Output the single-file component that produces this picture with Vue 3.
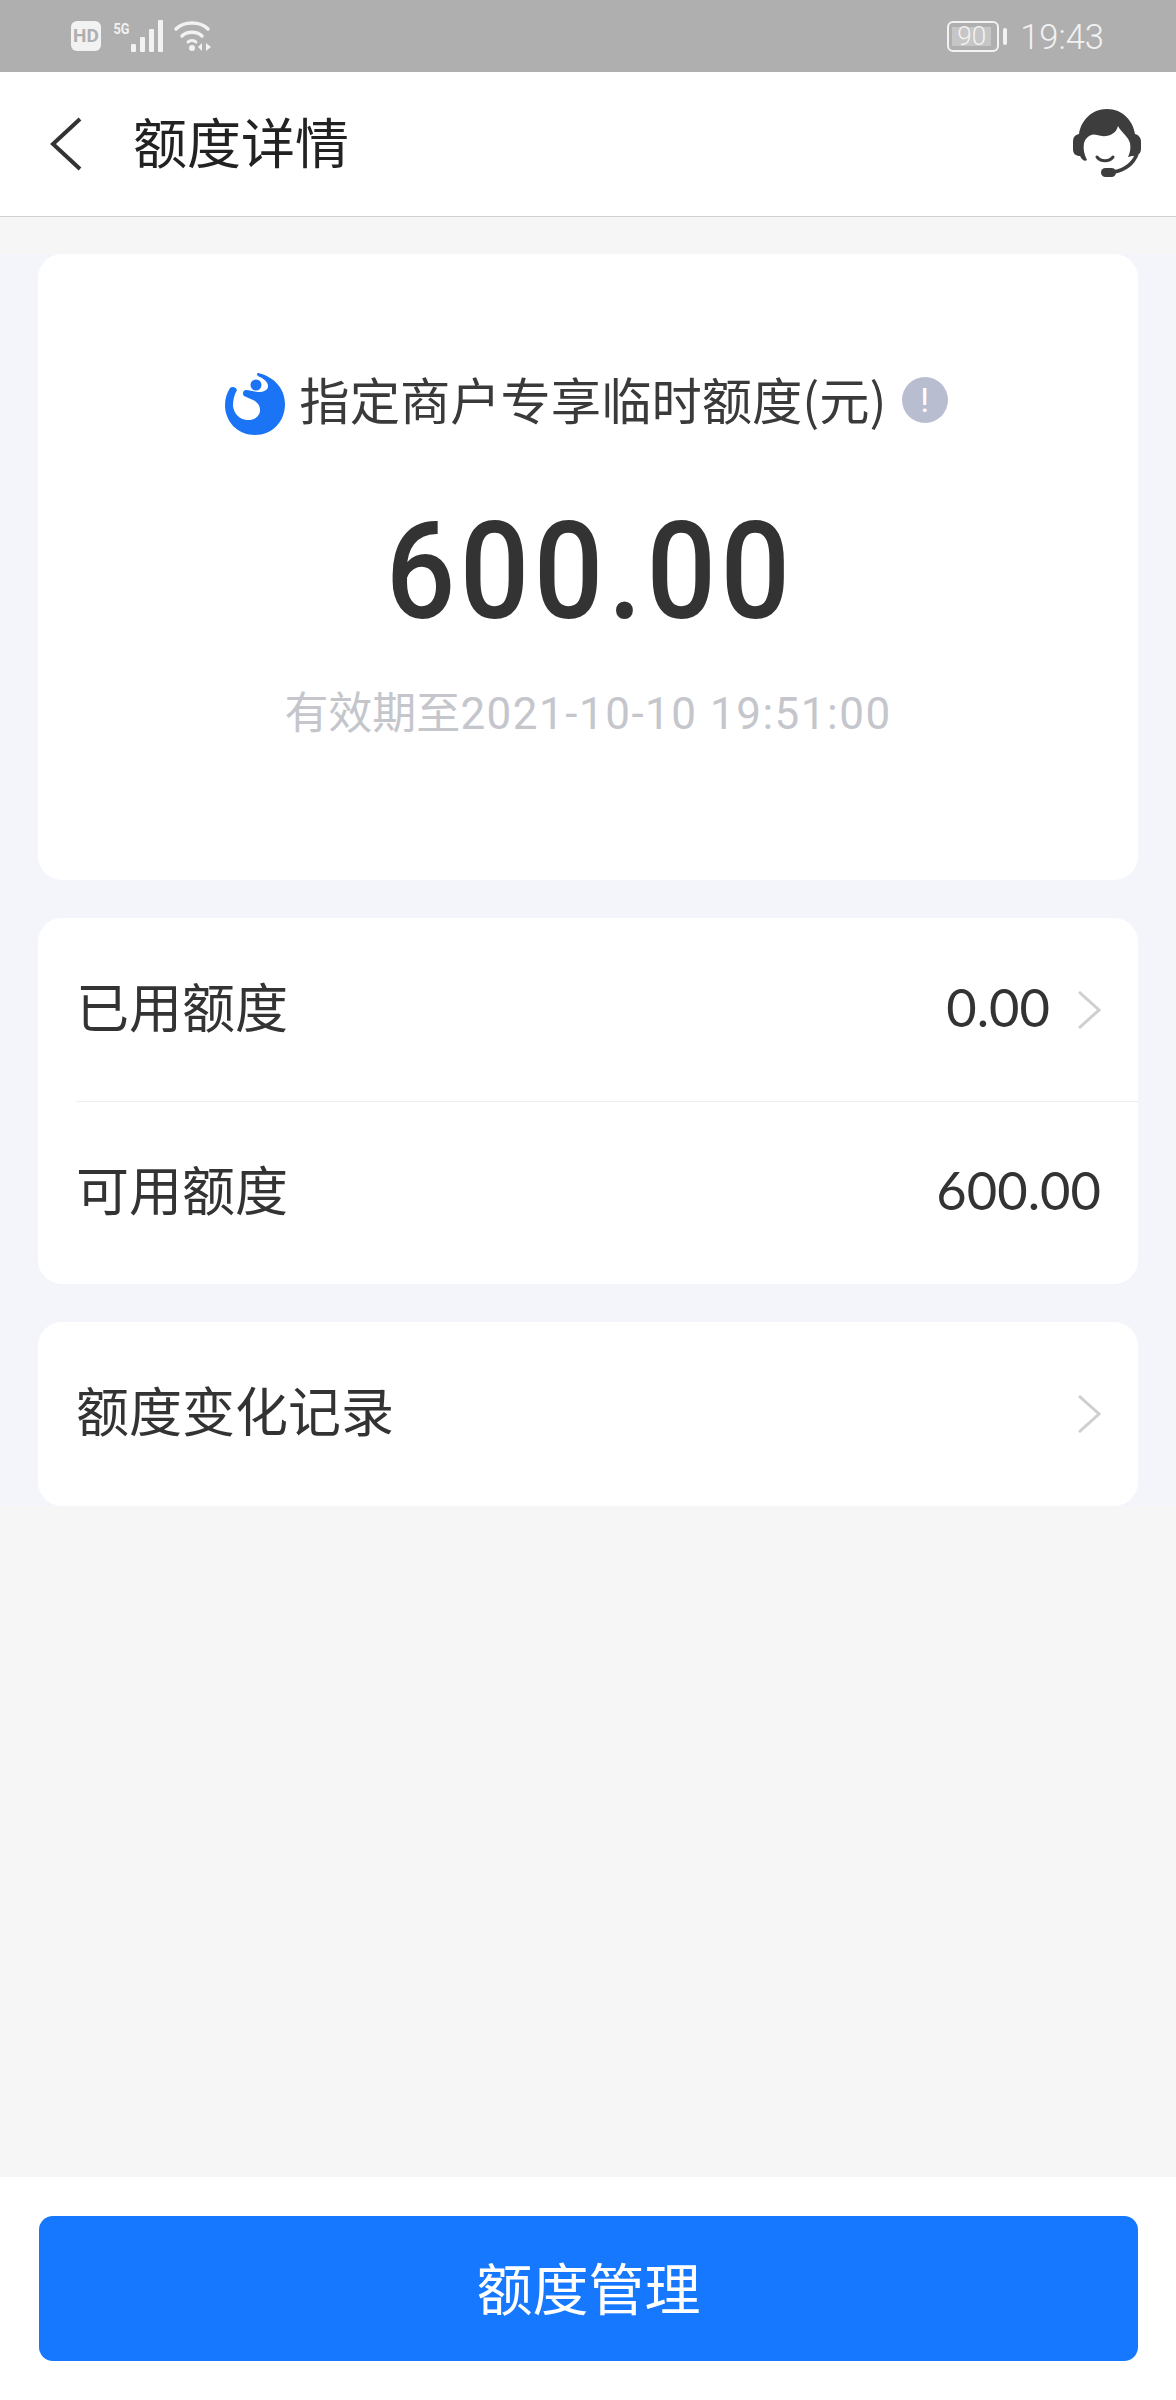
<script setup>
const rows = [
  { label: '已用额度', value: '0.00', arrow: true },
  { label: '可用额度', value: '600.00', arrow: false },
];
</script>

<template>
  <div class="page">
    <div class="status-bar">
      <div class="status-left">
        <span class="hd">HD</span>
        <span class="five-g">5G</span>
        <svg class="signal" width="32" height="32" viewBox="0 0 32 32">
          <rect x="0" y="24" width="5" height="8" rx="1" fill="#f2f2f2" />
          <rect x="9" y="17" width="5" height="15" rx="1" fill="#f2f2f2" />
          <rect x="18" y="9" width="5" height="23" rx="1" fill="#f2f2f2" />
          <rect x="27" y="0" width="5" height="32" rx="1" fill="#f2f2f2" />
        </svg>
        <svg class="wifi" width="38" height="32" viewBox="0 0 38 32">
          <path d="M2 9C10 1 26 1 34 9" fill="none" stroke="#f2f2f2" stroke-width="3.5" stroke-linecap="round" />
          <path d="M8 16C13 11 23 11 28 16" fill="none" stroke="#f2f2f2" stroke-width="3.5" stroke-linecap="round" />
          <path d="M14 22C16 20 20 20 22 22" fill="none" stroke="#f2f2f2" stroke-width="3" stroke-linecap="round" />
          <circle cx="18" cy="28" r="3" fill="#f2f2f2" />
          <path d="M28 23V31L24 27ZM32 23V31L37 27Z" fill="#f2f2f2" />
        </svg>
      </div>
      <div class="status-right">
        <div class="battery"><span class="battery-level">90</span></div>
        <span class="battery-cap"></span>
        <span class="clock">19:43</span>
      </div>
    </div>

    <div class="nav">
      <svg class="back" width="34" height="54" viewBox="0 0 34 54">
        <path d="M31 2L4 27L31 52" fill="none" stroke="#333" stroke-width="4" />
      </svg>
      <span class="nav-title">额度详情</span>
      <svg class="service" width="70" height="72" viewBox="0 0 70 72">
        <path d="M35 1C19 1 9 13 7 26C2 27 1 30 1 35V41C1 46 4 48 8 48C10 52 13 54 15 52C12 46 11 41 12 35C14 29 19 25 25 27C34 30 44 27 46 18C49 24 56 28 58 35C59 40 58 45 56 49L60 48C65 48 69 46 69 41V34C69 30 67 27 63 26C61 13 51 1 35 1Z" fill="#3d3d3d" />
        <path d="M25 49C29 54 37 54 41 49" fill="none" stroke="#3d3d3d" stroke-width="3" stroke-linecap="round" />
        <path d="M65 46C61 56 52 62 42 64" fill="none" stroke="#3d3d3d" stroke-width="3.5" />
        <rect x="29" y="60" width="15" height="9" rx="4.5" fill="#3d3d3d" />
      </svg>
    </div>

    <div class="content">
      <div class="cards">
        <div class="card quota">
          <div class="quota-title">
            <svg class="logo" width="60" height="62" viewBox="0 0 60 62">
              <path d="M33 0C50 4 60 16 60 31C60 49 47 62 30 62C13 62 0 49 0 32C0 25 2 20 5 15C7 13 11 14 12 17C9 22 8 27 8 33C9 41 15 47 23 47C30 47 35 43 35 37C35 32 32 29 28 27L19 23C17 21 18 17 21 17C25 17 29 19 33 19C39 19 43 17 43 13C43 9 39 6 35 4C32 3 31 0 33 0Z" fill="#1a74f5" />
              <circle cx="31" cy="12" r="5.5" fill="#1a74f5" />
            </svg>
            <span class="quota-label">指定商户专享临时额度(元)</span>
            <span class="info">!</span>
          </div>
          <div class="amount"><span>600.00</span></div>
          <div class="expire">有效期至<span class="expire-time">2021-10-10 19:51:00</span></div>
        </div>

        <div class="card">
          <div v-for="(row, i) in rows" :key="row.label" class="row" :class="{ divided: i > 0 }">
            <span class="row-label">{{ row.label }}</span>
            <span class="row-value">{{ row.value }}</span>
            <svg v-if="row.arrow" class="chevron" width="24" height="38" viewBox="0 0 24 38">
              <path d="M2 1L22 19L2 37" fill="none" stroke="#cfcfcf" stroke-width="3" />
            </svg>
          </div>
        </div>

        <div class="card">
          <div class="row last">
            <span class="row-label">额度变化记录</span>
            <svg class="chevron" width="24" height="38" viewBox="0 0 24 38">
              <path d="M2 1L22 19L2 37" fill="none" stroke="#cfcfcf" stroke-width="3" />
            </svg>
          </div>
        </div>
      </div>
    </div>

    <div class="footer">
      <div class="manage-btn">额度管理</div>
    </div>
  </div>
</template>

<style scoped>
.page {
  width: 1176px;
  height: 2400px;
  display: flex;
  flex-direction: column;
  background: #f6f6f6;
  font-family: "Noto Sans CJK SC", "Noto Sans", sans-serif;
  color: #333;
  overflow: hidden;
}

.status-bar {
  height: 72px;
  flex: none;
  background: #afafaf;
  display: flex;
  align-items: center;
  justify-content: space-between;
  padding: 0 72px 0 71px;
  color: #f2f2f2;
}

.status-left {
  display: flex;
  align-items: center;
}

.hd {
  width: 30px;
  height: 30px;
  border-radius: 6px;
  background: #f2f2f2;
  color: #afafaf;
  font-family: "Roboto", sans-serif;
  font-size: 19px;
  font-weight: 700;
  line-height: 30px;
  text-align: center;
}

.five-g {
  margin: -15px 0 0 11px;
  font-family: "Roboto", sans-serif;
  font-size: 15px;
  font-weight: 700;
  transform: scaleX(0.85);
}

.wifi {
  margin-left: 11px;
}

.status-right {
  display: flex;
  align-items: center;
}

.battery {
  width: 52px;
  height: 31px;
  box-sizing: border-box;
  border: 2px solid #f2f2f2;
  border-radius: 6px;
  padding: 4px 6px 4px 3px;
  display: flex;
}

.battery-level {
  width: 39px;
  height: 19px;
  background: #c6c6c6;
  color: #f2f2f2;
  font-family: "Roboto", sans-serif;
  font-size: 26px;
  font-weight: 300;
  line-height: 19px;
  text-align: center;
}

.battery-cap {
  width: 4px;
  height: 17px;
  margin-left: 4px;
  border-radius: 2px;
  background: #f2f2f2;
}

.clock {
  margin-left: 13px;
  margin-top: 2px;
  font-family: "Roboto", sans-serif;
  font-size: 34.5px;
  font-weight: 300;
}

.nav {
  height: 145px;
  flex: none;
  box-sizing: border-box;
  background: #fff;
  border-bottom: 1px solid #d0d0d0;
  display: flex;
  align-items: center;
  padding: 0 34px 0 49px;
}

.back {
  flex: none;
}

.nav-title {
  margin: 0 0 8px 50px;
  flex: 1;
  font-size: 54px;
  color: #222;
}

.content {
  flex: 1;
  padding-top: 37px;
}

.cards {
  padding: 0 38px;
  display: flex;
  flex-direction: column;
  gap: 38px;
  background: #f3f5fb;
}

.card {
  background: #fff;
  border-radius: 24px;
  overflow: hidden;
}

.quota {
  height: 626px;
  box-sizing: border-box;
  padding-top: 118px;
  display: flex;
  flex-direction: column;
  align-items: center;
}

.quota-title {
  display: flex;
  align-items: center;
  height: 66px;
  margin-left: -3px;
}

.logo {
  margin-top: -2px;
}

.quota-label {
  margin: -14px 0 0 14px;
  font-size: 50.3px;
  line-height: 66px;
  color: #3a3a3a;
}

.info {
  width: 46px;
  height: 46px;
  margin: -10px 0 0 15px;
  border-radius: 50%;
  background: #b9bdd0;
  color: #fff;
  font-family: "Roboto", sans-serif;
  font-size: 34px;
  line-height: 46px;
  text-align: center;
}

.amount {
  margin-top: 62px;
  height: 144px;
  padding-left: 5px;
  font-family: "Roboto", sans-serif;
  font-size: 136px;
  font-weight: 500;
  line-height: 144px;
  letter-spacing: 5px;
  color: #333;
}

.amount span {
  display: inline-block;
  transform: scaleX(0.9);
}

.expire {
  margin-top: 40px;
  font-family: "Roboto", "Noto Sans CJK SC", sans-serif;
  font-size: 44px;
  line-height: 60px;
  color: #c4c6cc;
}

.expire-time {
  letter-spacing: 1.5px;
}

.row {
  height: 183px;
  box-sizing: border-box;
  padding: 0 37px 0 38px;
  display: flex;
  align-items: center;
}

.row.last {
  height: 184px;
}

.row.divided {
  position: relative;
}

.row.divided::before {
  content: "";
  position: absolute;
  top: 0;
  left: 38px;
  right: 0;
  height: 1px;
  background: #eeeeee;
}

.row-label {
  flex: 1;
  margin-bottom: 10px;
  font-size: 53px;
  color: #333;
}

.row-value {
  margin-bottom: 6px;
  font-family: "Lato", sans-serif;
  font-size: 52.5px;
  color: #333;
}

.chevron {
  margin-left: 27px;
  flex: none;
}

.footer {
  height: 223px;
  flex: none;
  box-sizing: border-box;
  padding: 39px 38px 39px 39px;
  background: #fff;
}

.manage-btn {
  height: 145px;
  border-radius: 14px;
  background: #1677ff;
  color: #fff;
  font-size: 56px;
  line-height: 139px;
  text-align: center;
}
</style>
